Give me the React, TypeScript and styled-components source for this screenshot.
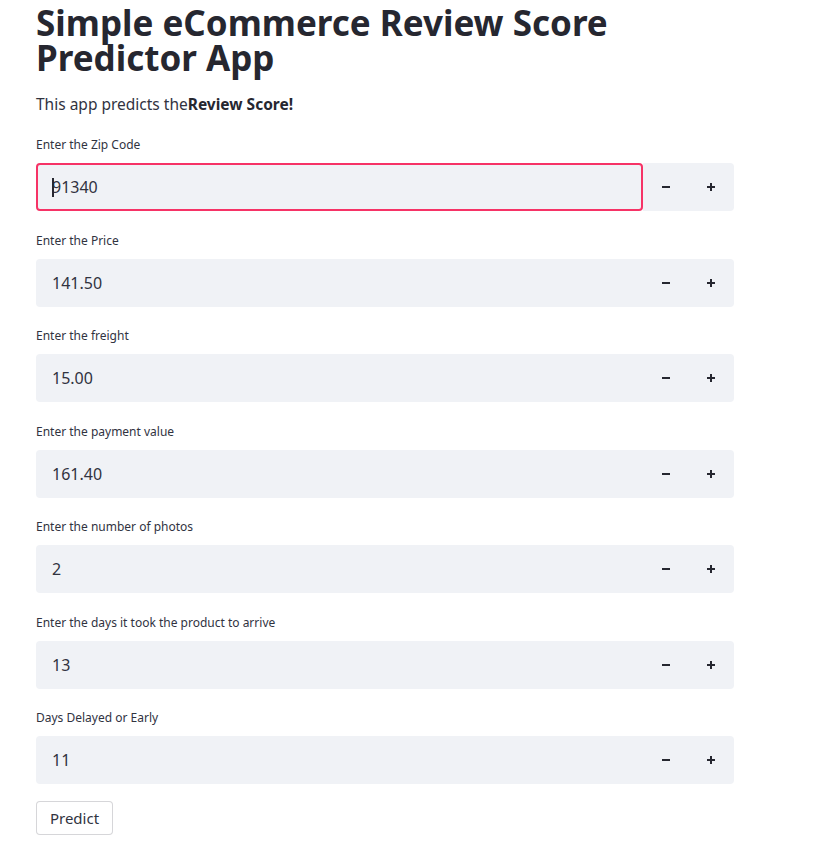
import React from "react";
import styled, { createGlobalStyle } from "styled-components";

const Global = createGlobalStyle`
  body { margin: 0; background: #fff; font-family: "Noto Sans", "Open Sans", sans-serif; color: #31333f; }
  * { box-sizing: border-box; }
`;

const Page = styled.main`
  width: 698px;
  margin-left: 36px;
  padding-top: 5px;
  display: flex;
  flex-direction: column;
`;

const Title = styled.h1`
  margin: 0;
  font-family: "Noto Sans", sans-serif;
  font-size: 35px;
  line-height: 35px;
  font-weight: 700;
  color: #262730;
`;

const Lead = styled.p`
  margin: 19px 0 0;
  font-size: 15.5px;
  line-height: 20px;
  color: #31333f;
  b { font-weight: 700; color: #262730; }
`;

const Fields = styled.div`
  margin-top: 22px;
  display: flex;
  flex-direction: column;
  gap: 20.5px;
`;

const Field = styled.div`
  display: flex;
  flex-direction: column;
`;

const Label = styled.label`
  font-size: 12px;
  line-height: 16px;
  padding-top: 1px;
  margin-bottom: 10px;
  color: #31333f;
`;

const Row = styled.div`
  display: flex;
  height: 48px;
`;

const InputBox = styled.div<{ $focused?: boolean }>`
  flex: 1;
  display: flex;
  align-items: center;
  padding-left: ${(p) => (p.$focused ? "14px" : "16px")};
  background: #f0f2f6;
  border: ${(p) => (p.$focused ? "2px solid #f63366" : "none")};
  border-radius: ${(p) => (p.$focused ? "4px" : "4px 0 0 4px")};
  font-size: 16px;
  color: #31333f;
`;

const Caret = styled.span`
  display: inline-block;
  width: 2px;
  height: 19px;
  background: #262730;
  margin-right: -2px;
  position: relative;
  z-index: 1;
`;

const Stepper = styled.div`
  width: 91px;
  display: flex;
  background: #f0f2f6;
  border-radius: 0 4px 4px 0;
`;

const StepBtn = styled.button`
  flex: 1;
  border: none;
  background: transparent;
  padding: 0;
  display: flex;
  align-items: center;
  justify-content: center;
  color: #262730;
  cursor: pointer;
`;

const Predict = styled.button`
  margin-top: 17px;
  align-self: flex-start;
  width: 77px;
  height: 34px;
  background: #fff;
  border: 1px solid rgba(49, 51, 63, 0.2);
  border-radius: 4px;
  font-family: "Noto Sans", sans-serif;
  font-size: 15px;
  color: #31333f;
  padding: 0;
`;

const Minus = () => (
  <svg width="10" height="10" viewBox="0 0 10 10">
    <line x1="1" y1="5" x2="9" y2="5" stroke="currentColor" strokeWidth="2" />
  </svg>
);
const Plus = () => (
  <svg width="10" height="10" viewBox="0 0 10 10">
    <line x1="1" y1="5" x2="9" y2="5" stroke="currentColor" strokeWidth="2" />
    <line x1="5" y1="1" x2="5" y2="9" stroke="currentColor" strokeWidth="2" />
  </svg>
);

const fields = [
  { label: "Enter the Zip Code", value: "91340", focused: true },
  { label: "Enter the Price", value: "141.50" },
  { label: "Enter the freight", value: "15.00" },
  { label: "Enter the payment value", value: "161.40" },
  { label: "Enter the number of photos", value: "2" },
  { label: "Enter the days it took the product to arrive", value: "13" },
  { label: "Days Delayed or Early", value: "11" },
];

export default function App() {
  return (
    <>
      <Global />
      <Page>
        <Title>Simple eCommerce Review Score Predictor App</Title>
        <Lead>
          This app predicts the<b>Review Score!</b>
        </Lead>
        <Fields>
          {fields.map((f) => (
            <Field key={f.label}>
              <Label>{f.label}</Label>
              <Row>
                <InputBox $focused={f.focused}>
                  {f.focused && <Caret />}
                  {f.value}
                </InputBox>
                <Stepper>
                  <StepBtn aria-label="decrement">
                    <Minus />
                  </StepBtn>
                  <StepBtn aria-label="increment">
                    <Plus />
                  </StepBtn>
                </Stepper>
              </Row>
            </Field>
          ))}
        </Fields>
        <Predict>Predict</Predict>
      </Page>
    </>
  );
}
